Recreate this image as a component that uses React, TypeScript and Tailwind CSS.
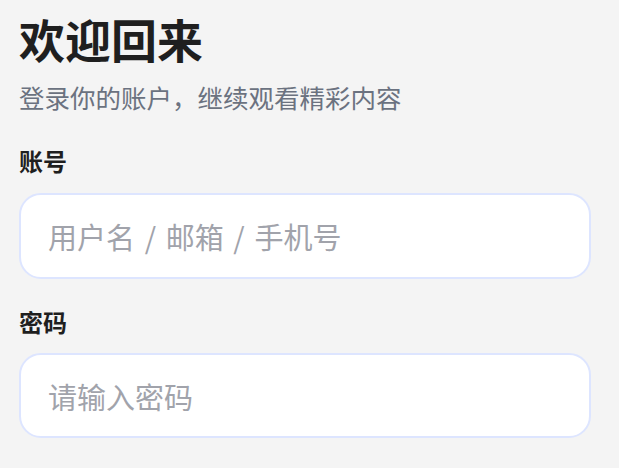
import React, { useState } from 'react';

const LoginForm: React.FC = () => {
  const [account, setAccount] = useState('');
  const [password, setPassword] = useState('');

  return (
    <div
      className="min-h-[468px] w-full bg-[#f4f4f4] pl-[19px] pr-[28px] pt-[10px] text-[#1f1f1f]"
      style={{ fontFamily: '"Noto Sans CJK SC", "Noto Sans", sans-serif' }}
    >
      <h1 className="text-[46px] font-bold leading-[56px]">欢迎回来</h1>
      <p className="mt-[13px] text-[25.5px] leading-[36px] text-[#6b7280]">登录你的账户，继续观看精彩内容</p>

      <label className="mt-[30px] block text-[24px] font-bold leading-[32px]">账号</label>
      <input
        type="text"
        value={account}
        onChange={(e) => setAccount(e.target.value)}
        placeholder={'用户名\u2004/\u2004邮箱\u2004/\u2004手机号'}
        className="mt-[16px] block h-[86px] w-full rounded-[22px] border-2 border-[#dde5ff] bg-white px-[27px] text-[29px] text-[#1f1f1f] outline-none placeholder:text-[#a1a3ab]"
      />

      <label className="mt-[27px] block text-[24px] font-bold leading-[32px]">密码</label>
      <input
        type="password"
        value={password}
        onChange={(e) => setPassword(e.target.value)}
        placeholder="请输入密码"
        className="mt-[15px] block h-[85px] w-full rounded-[22px] border-2 border-[#dde5ff] bg-white px-[27px] text-[29px] text-[#1f1f1f] outline-none placeholder:text-[#a1a3ab]"
      />
    </div>
  );
};

export default LoginForm;
